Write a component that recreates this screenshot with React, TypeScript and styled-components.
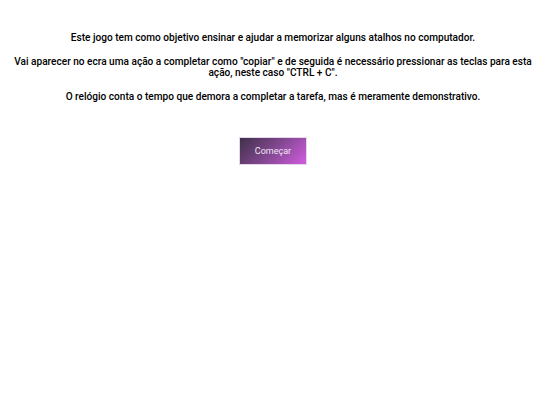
import styled, { createGlobalStyle } from 'styled-components';

const GlobalStyle = createGlobalStyle`
  body {
    margin: 8px;
    background: #ffffff;
    font-family: Roboto, "Liberation Sans", sans-serif;
  }
`;

const Page = styled.div`
  display: flex;
  flex-direction: column;
  align-items: center;
  padding: 24px 0 0 6px;
`;

const Intro = styled.p`
  margin: 0 0 12px;
  font-size: 10.1px;
  line-height: 11.7px;
  font-weight: 500;
  color: #000;
  text-align: center;
`;

const StartButton = styled.button`
  margin-top: 22px;
  width: 68px;
  height: 28px;
  padding: 0;
  border: 1px solid #e6d6ec;
  background: linear-gradient(135deg, #3f3148 0%, #8a4a99 55%, #d25ce0 100%);
  color: #f3e6f6;
  font-family: Roboto, "Liberation Sans", sans-serif;
  font-size: 9px;
  cursor: pointer;
`;

const App = () => {
  return (
    <Page>
      <GlobalStyle />
      <Intro>Este jogo tem como objetivo ensinar e ajudar a memorizar alguns atalhos no computador.</Intro>
      <Intro>
        Vai aparecer no ecra uma ação a completar como "copiar" e de seguida é necessário pressionar as teclas para esta
        ação, neste caso "CTRL + C".
      </Intro>
      <Intro>O relógio conta o tempo que demora a completar a tarefa, mas é meramente demonstrativo.</Intro>
      <StartButton>Começar</StartButton>
    </Page>
  );
};

export default App;
